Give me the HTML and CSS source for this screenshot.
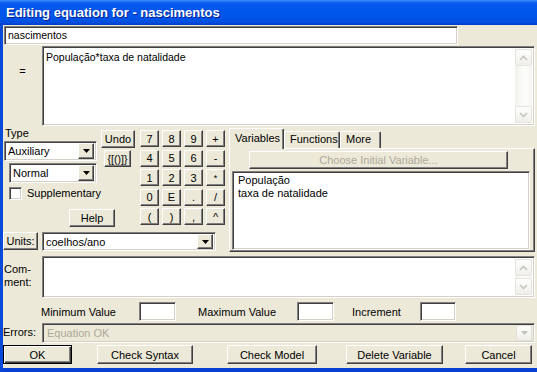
FILE: index.html
```html
<!DOCTYPE html>
<html lang="en">
<head>
    <meta charset="UTF-8">
    <title>Editing equation for - nascimentos</title>
    <link rel="stylesheet" href="styles.css">
</head>
<body>
    <div class="window">
        <div class="titlebar">Editing equation for - nascimentos</div>

        <div class="frame">
            <div class="name-row">
                <div class="field name-field">nascimentos</div>
            </div>

            <div class="eq-row">
                <div class="eq-label">=</div>
                <div class="field eq-box">
                    <div class="eq-text">População*taxa de natalidade</div>
                    <div class="scrollbar">
                        <div class="sb-btn"><svg width="9" height="6"><path d="M1 5L4.5 1.5L8 5" fill="none" stroke="#c6c6be" stroke-width="1.6"/></svg></div>
                        <div class="sb-btn"><svg width="9" height="6"><path d="M1 1L4.5 4.5L8 1" fill="none" stroke="#c6c6be" stroke-width="1.6"/></svg></div>
                    </div>
                </div>
            </div>

            <div class="middle">
                <div class="left-block">
                    <div class="left-top">
                        <div class="controls">
                            <div class="type-label">Type</div>
                            <div class="undo-col">
                                <button class="btn undo">Undo</button>
                                <button class="btn braces">{[()]}</button>
                            </div>
                            <div class="combo aux">
                                <span class="combo-text">Auxiliary</span>
                                <span class="combo-arrow"><svg width="7" height="4"><path d="M0 0h7L3.5 4z"/></svg></span>
                            </div>
                            <div class="combo normal">
                                <span class="combo-text">Normal</span>
                                <span class="combo-arrow"><svg width="7" height="4"><path d="M0 0h7L3.5 4z"/></svg></span>
                            </div>
                            <div class="check">
                                <span class="check-box"></span>
                                <span>Supplementary</span>
                            </div>
                            <button class="btn help">Help</button>
                        </div>

                        <div class="keypad">
                            <button class="btn key">7</button>
                            <button class="btn key">8</button>
                            <button class="btn key">9</button>
                            <button class="btn key">+</button>
                            <button class="btn key">4</button>
                            <button class="btn key">5</button>
                            <button class="btn key">6</button>
                            <button class="btn key">-</button>
                            <button class="btn key">1</button>
                            <button class="btn key">2</button>
                            <button class="btn key">3</button>
                            <button class="btn key small">*</button>
                            <button class="btn key">0</button>
                            <button class="btn key">E</button>
                            <button class="btn key">.</button>
                            <button class="btn key">/</button>
                            <button class="btn key">(</button>
                            <button class="btn key">)</button>
                            <button class="btn key">,</button>
                            <button class="btn key">^</button>
                        </div>
                    </div>

                    <div class="units-row">
                        <button class="btn units-btn">Units:</button>
                        <div class="combo units">
                            <span class="combo-text">coelhos/ano</span>
                            <span class="combo-arrow"><svg width="7" height="4"><path d="M0 0h7L3.5 4z"/></svg></span>
                        </div>
                    </div>
                </div>

                <div class="tab-panel">
                    <div class="tab-strip">
                        <div class="tab active">Variables</div>
                        <div class="tab functions">Functions</div>
                        <div class="tab more">More</div>
                    </div>
                    <div class="tab-body">
                        <button class="btn choose">Choose Initial Variable...</button>
                        <div class="field list">
                            <div>População</div>
                            <div>taxa de natalidade</div>
                        </div>
                    </div>
                </div>
            </div>

            <div class="comment-row">
                <div class="comment-label">Com-<br>ment:</div>
                <div class="field comment-box">
                    <div class="comment-text"></div>
                    <div class="scrollbar">
                        <div class="sb-btn"><svg width="9" height="6"><path d="M1 5L4.5 1.5L8 5" fill="none" stroke="#c6c6be" stroke-width="1.6"/></svg></div>
                        <div class="sb-btn"><svg width="9" height="6"><path d="M1 1L4.5 4.5L8 1" fill="none" stroke="#c6c6be" stroke-width="1.6"/></svg></div>
                    </div>
                </div>
            </div>

            <div class="range-row">
                <span class="range-label min-label">Minimum Value</span>
                <div class="field range-box"></div>
                <span class="range-label max-label">Maximum Value</span>
                <div class="field range-box"></div>
                <span class="range-label inc-label">Increment</span>
                <div class="field range-box inc-box"></div>
            </div>

            <div class="errors-row">
                <div class="errors-label">Errors:</div>
                <div class="field errors-box">
                    <span class="errors-text">Equation OK</span>
                    <span class="errors-arrow"><svg width="7" height="4"><path d="M0 0h7L3.5 4z" fill="#c2c2ba"/></svg></span>
                </div>
            </div>

            <div class="button-row">
                <button class="btn default ok">OK</button>
                <button class="btn syntax">Check Syntax</button>
                <button class="btn model">Check Model</button>
                <button class="btn delete">Delete Variable</button>
                <button class="btn cancel">Cancel</button>
            </div>
        </div>
    </div>
</body>
</html>
```

FILE: styles.css
```css
* {
    box-sizing: border-box;
}

body {
    margin: 0;
    font-family: "Liberation Sans", Arial, sans-serif;
    font-size: 10.5px;
    color: #000;
    background: #fff;
}

.window {
    width: 537px;
    height: 372px;
    display: flex;
    flex-direction: column;
    overflow: hidden;
}

.titlebar {
    height: 25px;
    padding: 5px 0 0 6px;
    color: #fff;
    font-weight: bold;
    font-size: 13px;
    text-shadow: 1px 1px #0a1f8f;
    background: linear-gradient(#3a8cfa 0, #0a5cf0 12%, #0055ea 40%, #0054e8 70%, #0150e0 88%, #003cc8 100%);
}

.frame {
    flex: 1;
    background: #ece9d8;
    border-left: 3px solid #0a4ad9;
    border-bottom: 4px solid #0840d2;
    padding-bottom: 4px;
    display: flex;
    flex-direction: column;
}

/* shared 3D looks */
.field {
    background: #fff;
    border: 1px solid;
    border-color: #808080 #fff #fff #808080;
    box-shadow: inset 1px 1px #404040, inset -1px -1px #d4d0c8;
}

.btn {
    font-family: inherit;
    font-size: 10.5px;
    color: #000;
    background: #ece9d8;
    border: 1px solid;
    border-color: #fff #404040 #404040 #fff;
    box-shadow: inset -1px -1px #808080;
    padding: 0;
    margin: 0;
    border-radius: 0;
    line-height: 14px;
    cursor: pointer;
}

.btn.default {
    border: 1px solid #000;
    box-shadow: inset 1px 1px #fff, inset -1px -1px #404040, inset -2px -2px #808080;
}

/* name + equation */
.name-row {
    margin: 1px 0 0 1px;
}

.name-field {
    width: 454px;
    height: 19px;
    padding: 1px 3px;
    line-height: 15px;
}

.eq-row {
    display: flex;
    margin-top: 1px;
    height: 80px;
}

.eq-label {
    width: 39px;
    text-align: center;
    padding-top: 19px;
    font-size: 11px;
}

.eq-box {
    flex: 1;
    margin-right: 2px;
    display: flex;
    padding: 2px;
}

.eq-text {
    flex: 1;
    padding: 2px 1px;
}

.scrollbar {
    width: 17px;
    display: flex;
    flex-direction: column;
    justify-content: space-between;
    background: linear-gradient(to right, #f2f1ec, #fdfdfb 60%, #f6f5f0);
}

.sb-btn {
    height: 17px;
    display: flex;
    align-items: center;
    justify-content: center;
    border: 1px solid #e4e3dc;
    border-radius: 2px;
    background: linear-gradient(#fefefe, #f0efea);
}

/* middle section */
.middle {
    display: flex;
    gap: 4px;
    height: 126px;
}

.left-block {
    width: 222px;
    display: flex;
    flex-direction: column;
}

.left-top {
    display: flex;
    height: 106px;
}

.controls {
    width: 133px;
    display: grid;
    grid-template-columns: 95px 38px;
    grid-template-rows: 14px 22px 23px 22px 25px;
}

.type-label {
    grid-column: 1;
    grid-row: 1;
    padding: 1px 0 0 2px;
    font-size: 11px;
}

.undo-col {
    grid-column: 2;
    grid-row: 1 / 4;
    display: flex;
    flex-direction: column;
    align-items: flex-start;
    padding-top: 4px;
    gap: 2px;
}

.undo {
    width: 34px;
    height: 18px;
    margin-left: 3px;
    font-size: 11px;
}

.braces {
    width: 27px;
    height: 17px;
    margin-left: 6px;
}

.combo {
    height: 20px;
    background: #fff;
    border: 1px solid;
    border-color: #808080 #fff #fff #808080;
    box-shadow: inset 1px 1px #404040, inset -1px -1px #d4d0c8;
    display: flex;
    align-items: center;
    padding: 2px;
}

.combo-text {
    flex: 1;
    padding-left: 1px;
    font-size: 11px;
}

.combo-arrow {
    width: 16px;
    height: 16px;
    display: flex;
    align-items: center;
    justify-content: center;
    background: #ece9d8;
    border: 1px solid;
    border-color: #fff #404040 #404040 #fff;
    box-shadow: inset -1px -1px #808080;
}

.aux {
    grid-column: 1;
    grid-row: 2;
    width: 93px;
    margin: 1px 0 0 1px;
}

.normal {
    grid-column: 1;
    grid-row: 3;
    width: 88px;
    margin: 1px 0 0 6px;
}

.check {
    grid-column: 1 / 3;
    grid-row: 4;
    display: flex;
    align-items: center;
    gap: 5px;
    margin: 1px 0 0 6px;
    height: 14px;
    font-size: 11px;
}

.check-box {
    width: 13px;
    height: 13px;
    background: #fff;
    border: 1px solid;
    border-color: #808080 #fff #fff #808080;
    box-shadow: inset 1px 1px #404040, inset -1px -1px #d4d0c8;
}

.help {
    grid-column: 1 / 3;
    grid-row: 5;
    width: 46px;
    height: 18px;
    margin: 2px 0 0 66px;
    font-size: 11px;
}

.keypad {
    margin-left: 4px;
    padding-top: 4px;
    display: grid;
    grid-template-columns: repeat(4, 19px);
    grid-auto-rows: 17px;
    column-gap: 3px;
    row-gap: 2.5px;
}

.key {
    font-size: 11px;
}

.key.small {
    font-size: 9px;
}

.units-row {
    display: flex;
    gap: 4px;
    align-items: flex-start;
}

.units-btn {
    width: 35px;
    height: 18px;
    font-size: 11px;
}

.units {
    width: 174px;
    height: 19px;
}

.units .combo-arrow {
    height: 15px;
}

/* tabs */
.tab-panel {
    width: 306px;
    display: flex;
    flex-direction: column;
}

.tab-strip {
    display: flex;
    align-items: flex-end;
    height: 22px;
    position: relative;
    z-index: 1;
}

.tab {
    height: 17px;
    padding: 1px 0 0 5px;
    border: 1px solid;
    border-bottom: none;
    border-color: #fff #404040 #404040 #fff;
    box-shadow: inset -1px 0 #808080;
    border-radius: 2px 2px 0 0;
    background: #ece9d8;
    font-size: 11px;
}

.tab.active {
    width: 55px;
    height: 21px;
    padding-top: 3px;
    margin-bottom: -1px;
}

.tab.functions {
    width: 56px;
}

.tab.more {
    width: 41px;
}

.tab-body {
    height: 104px;
    border: 1px solid;
    border-color: #fff #404040 #404040 #fff;
    box-shadow: inset -1px -1px #808080;
}

.choose {
    display: block;
    width: 259px;
    height: 18px;
    margin: 2px 0 0 19px;
    color: #aca899;
    font-size: 11px;
}

.list {
    width: 298px;
    height: 79px;
    margin: 2px 0 0 2px;
    padding: 2px 5px;
    line-height: 13px;
    font-size: 11px;
}

/* comment */
.comment-row {
    display: flex;
    margin-top: 4px;
    height: 42px;
}

.comment-label {
    width: 39px;
    padding: 7px 0 0 1px;
    line-height: 13px;
    font-size: 11px;
}

.comment-box {
    flex: 1;
    margin-right: 2px;
    display: flex;
    padding: 2px;
}

.comment-text {
    flex: 1;
}

.comment-box .sb-btn {
    height: 17px;
}

/* min / max / increment */
.range-row {
    display: flex;
    align-items: center;
    margin-top: 4px;
    height: 19px;
    font-size: 11px;
}

.range-box {
    width: 37px;
    height: 19px;
}

.min-label {
    margin-left: 38px;
    width: 98px;
}

.max-label {
    margin-left: 22px;
    width: 99px;
}

.inc-label {
    margin-left: 18px;
    width: 68px;
}

.inc-box {
    width: 36px;
}

/* errors */
.errors-row {
    display: flex;
    margin-top: 2px;
    height: 20px;
    font-size: 11px;
}

.errors-label {
    width: 39px;
    padding-top: 3px;
}

.errors-box {
    flex: 1;
    margin-right: 2px;
    background: #ece9d8;
    display: flex;
    align-items: center;
    padding: 2px;
}

.errors-text {
    flex: 1;
    padding-left: 2px;
    color: #aca899;
}

.errors-arrow {
    width: 16px;
    height: 16px;
    display: flex;
    align-items: center;
    justify-content: center;
    border: 1px solid #e2e1da;
    border-radius: 2px;
    background: linear-gradient(#fdfdfb, #efeee9);
}

/* bottom buttons */
.button-row {
    display: flex;
    margin-top: 2px;
    height: 19px;
}

.button-row .btn {
    height: 19px;
    font-size: 11px;
}

.ok {
    width: 69px;
}

.syntax {
    width: 96px;
    margin-left: 25px;
}

.model {
    width: 90px;
    margin-left: 34px;
}

.delete {
    width: 97px;
    margin-left: 29px;
}

.cancel {
    width: 67px;
    margin-left: 22px;
}
```
